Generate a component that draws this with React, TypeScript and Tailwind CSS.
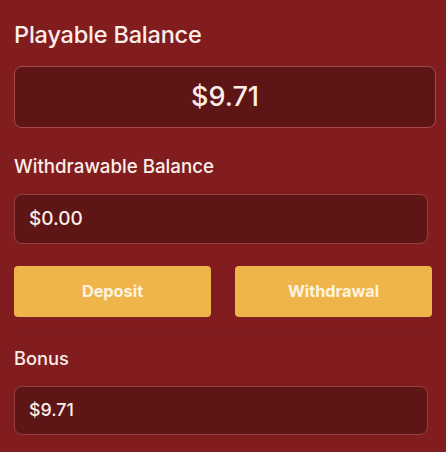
export default function App() {
  return (
    <div
      className="w-[446px] h-[452px] overflow-hidden bg-[#821d1f] text-[#fbeee9] px-[14px]"
      style={{ fontFamily: 'Inter, "Noto Sans", sans-serif' }}
    >
      {/* Playable */}
      <div className="pt-[21px] text-[23.5px] leading-[28px] font-medium tracking-[-0.2px]">Playable Balance</div>
      <div className="mt-[17px] -mr-[4px] h-[62px] rounded-[8px] border border-[#a54a48] bg-[#5d1515] flex items-center justify-center text-[27px] font-medium">
        $9.71
      </div>

      {/* Withdrawable */}
      <div className="mt-[28px] text-[18.7px] leading-[22px] font-medium">Withdrawable Balance</div>
      <div className="mt-[16px] mr-[4px] h-[50px] rounded-[8px] border border-[#94403e] bg-[#5d1515] flex items-center px-[14px] text-[19px] font-medium">
        $0.00
      </div>

      <div className="mt-[22px] grid grid-cols-2 gap-[24px]">
        <button className="h-[51px] rounded-[4px] bg-[#f0b54a] text-[#fdf3e0] text-[16.3px] font-bold">Deposit</button>
        <button className="h-[51px] rounded-[4px] bg-[#f0b54a] text-[#fdf3e0] text-[16.3px] font-bold">Withdrawal</button>
      </div>

      <div className="mt-[16px] h-px bg-[#7a191b]" />

      {/* Bonus */}
      <div className="mt-[12px] text-[18.3px] leading-[24px] font-medium">Bonus</div>
      <div className="mt-[16px] mr-[4px] h-[49px] rounded-[8px] border border-[#94403e] bg-[#5d1515] flex items-center px-[14px] text-[17.8px] font-medium">
        $9.71
      </div>
    </div>
  )
}
